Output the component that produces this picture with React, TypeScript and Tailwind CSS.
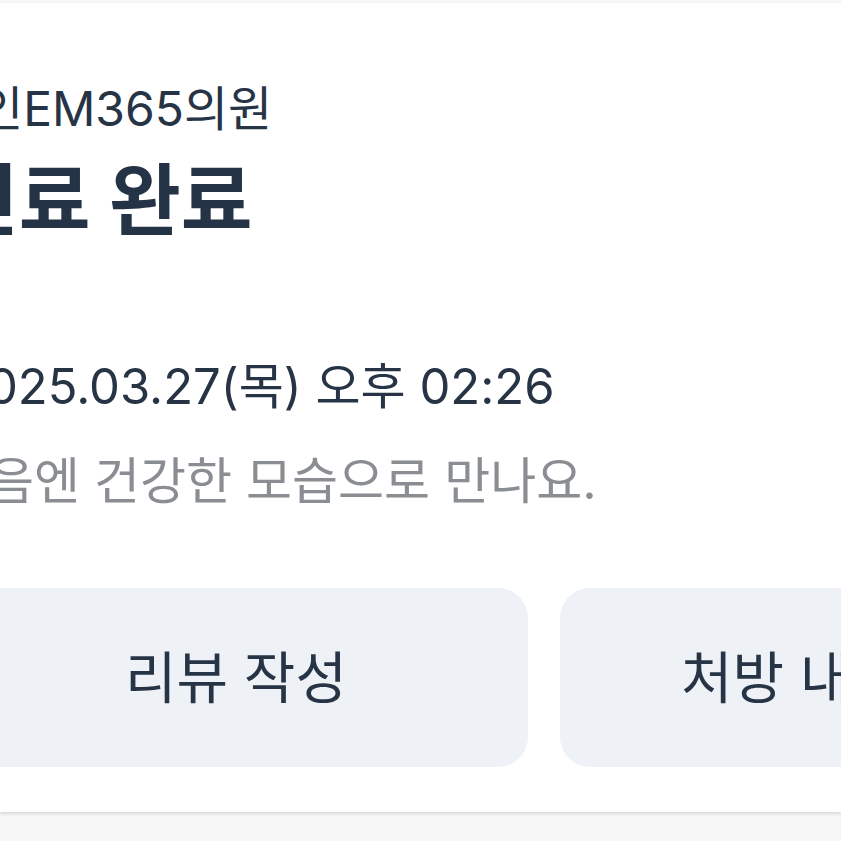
import React from "react";

export default function App() {
  const font = { fontFamily: 'Inter, "Noto Sans CJK KR", "Noto Sans", sans-serif' };
  return (
    <div className="w-[841px] h-[841px] overflow-hidden bg-[#f6f6f6] pt-[3px]" style={font}>
      <div className="bg-white shadow-[0_2px_3px_rgba(0,0,0,0.12)] pt-[82px] pb-[45px] whitespace-nowrap">
        <div className="ml-[-21px] text-[48px] leading-none text-[#263445]">인EM365의원</div>
        <div className="ml-[-53px] mt-[29px] text-[78px] leading-none font-bold text-[#243346]">진료 완료</div>
        <div className="ml-[-43px] mt-[122px] text-[49px] leading-none text-[#263445]">2025.03.27(목) 오후 02:26</div>
        <div className="ml-[-58px] mt-[45px] text-[50px] leading-none text-[#8a8d92]">다음엔 건강한 모습으로 만나요.</div>
        <div className="flex gap-[32px] mt-[82px] ml-[-56px]">
          <button className="w-[584px] h-[179px] shrink-0 rounded-[30px] bg-[#eef2f7] flex items-center justify-center text-[56px] text-[#263445]">
            리뷰 작성
          </button>
          <button className="w-[464px] h-[179px] shrink-0 rounded-[30px] bg-[#eef2f7] flex items-center justify-center text-[56px] text-[#263445]">
            처방 내역
          </button>
        </div>
      </div>
    </div>
  );
}
